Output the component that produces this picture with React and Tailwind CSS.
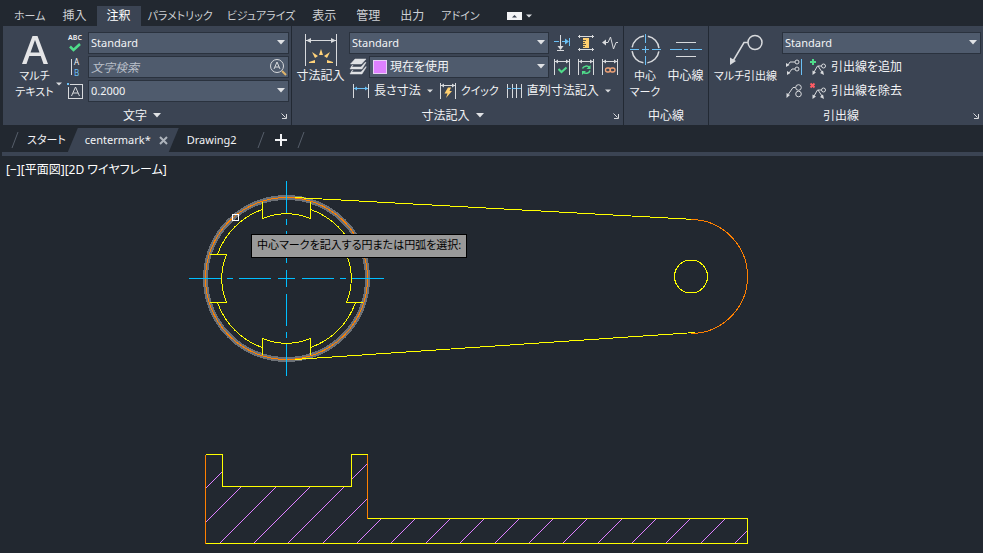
const tabs = ["ホーム", "挿入", "注釈", "パラメトリック", "ビジュアライズ", "表示", "管理", "出力", "アドイン"]
const kanaTabs = ["ホーム", "パラメトリック", "ビジュアライズ", "アドイン"]

function Icon({ w = 18, h = 18, className = "", children }) {
  return (
    <svg
      width={w}
      height={h}
      viewBox={`0 0 ${w} ${h}`}
      fill="none"
      stroke="#d8dadd"
      aria-hidden="true"
      className={`shrink-0 ${className}`}>
      {children}
    </svg>
  )
}

function Caret({ small }) {
  return small ? (
    <Icon w={6} h={4}><path d="M0 0.5h6L3 3.5z" fill="#d8dadd" stroke="none" /></Icon>
  ) : (
    <Icon w={8} h={5}><path d="M0 0h8L4 4.5z" fill="#e0e2e5" stroke="none" /></Icon>
  )
}

function SelectBox({ label, value, swatch }) {
  return (
    <div className="relative min-w-0 flex-1">
      <select
        aria-label={label}
        defaultValue={value}
        className={`block h-[22px] w-full appearance-none border border-[#2a323e] bg-[#4f5b6d] pr-5 leading-5 text-[#f2f3f5] outline-none ${swatch ? "pl-5" : "pl-0.5 text-[11px]"}`}>
        <option>{value}</option>
      </select>
      {swatch && <span className="pointer-events-none absolute top-1 left-1 size-3.5 border border-[#e8d0f5] bg-[#df80ff]" />}
      <span className="pointer-events-none absolute top-2 right-1"><Caret /></span>
    </div>
  )
}

function BigButton({ icon, lines, className = "", caret }) {
  return (
    <button className={`relative flex shrink-0 flex-col items-center pt-0.5 ${className}`}>
      {icon}
      <span className="flex flex-col items-center leading-4 whitespace-nowrap">
        {lines.map((line) => (
          <span key={line}>{line}</span>
        ))}
      </span>
      {caret && <span className="absolute right-1 bottom-4"><Caret small /></span>}
    </button>
  )
}

function IconButton({ label, children }) {
  return (
    <button aria-label={label} className="flex h-[22px] w-[18px] shrink-0 items-center justify-center">
      {children}
    </button>
  )
}

function Panel({ title, caret, launcher, className = "", children }) {
  return (
    <section className={`flex flex-col border-r border-[#222933] pt-1.5 ${className}`}>
      <div className="flex h-[70px]">{children}</div>
      <div className="flex h-[23px] items-center pt-1">
        <button className="flex flex-1 items-center justify-center gap-1.5">
          {title}
          {caret && <Caret />}
        </button>
        {launcher && (
          <button aria-label={`${title} 設定`} className="mr-1 w-1.5">
            <Icon w={6} h={6}><path d="M0.5 0.5l4 4M5.5 1v4.5H1" /></Icon>
          </button>
        )}
      </div>
    </section>
  )
}

function DimFrame({ children, className }) {
  return (
    <Icon className={className}>
      <path d="M1.5 1v16M16.5 1v16M2 3.5h14" shapeRendering="crispEdges" />
      <path d="M2 3.5l3-2v4zM16 3.5l-3-2v4z" fill="#d8dadd" stroke="none" />
      {children}
    </Icon>
  )
}

function TextPanel() {
  return (
    <Panel title="文字" caret launcher className="w-[289px] shrink-0">
      <BigButton
        className="w-[63px] text-[11px]"
        caret
        lines={["マルチ", "テキスト"]}
        icon={
          <Icon w={28} h={34}>
            <path d="M1 30L11.500 2h5L27 30h-4.500l-2.800-8H8.300l-2.800 8zM9.500 18.500h9L14 6z" fill="#e4e5e7" stroke="none" fillRule="evenodd" />
          </Icon>
        } />
      <div className="flex min-w-0 flex-1 flex-col gap-0.5 pr-0.5">
        <div className="flex gap-1">
          <IconButton label="スペルチェック">
            <span className="relative flex h-[22px] flex-col items-center">
              <span className="text-[7px] leading-[11px] font-semibold">ABC</span>
              <Icon w={14} h={9}><path d="M2 3.500l3.500 3.500L12 1" stroke="#4fdc8a" strokeWidth="2.500" /></Icon>
            </span>
          </IconButton>
          <SelectBox label="文字スタイル" value="Standard" />
        </div>
        <div className="flex gap-1">
          <IconButton label="文字位置合わせ">
            <Icon w={1} h={16}><path d="M0.500 0v16" shapeRendering="crispEdges" /></Icon>
            <span className="flex flex-col pl-0.5 text-[8px] leading-[11px]">
              <span>A</span>
              <span className="text-[#6bc0f5]">B</span>
            </span>
          </IconButton>
          <div className="relative min-w-0 flex-1">
            <input
              aria-label="文字検索"
              placeholder="文字検索"
              className="block h-[22px] w-full border border-[#2a323e] bg-[#4f5b6d] pr-6 pl-0.5 italic outline-none placeholder:text-[#b9bfc8]" />
            <button aria-label="検索" className="absolute top-0.5 right-0.5">
              <Icon>
                <circle cx="8" cy="8" r="6.500" />
                <path d="M5 11l3-7 3 7M6 9h4" />
                <path d="M13 13l4 4" stroke="#e0b56a" strokeWidth="2" />
              </Icon>
            </button>
          </div>
        </div>
        <div className="flex gap-1">
          <IconButton label="文字高さ">
            <Icon>
              <path d="M4 2.500h12.500v14H2.500V5" shapeRendering="crispEdges" />
              <path d="M5.500 14l4-9 4 9M7 11h5" />
              <path d="M1 1h2v2H1z" fill="#6bc0f5" stroke="none" />
            </Icon>
          </IconButton>
          <SelectBox label="高さ" value="0.2000" />
        </div>
      </div>
    </Panel>
  )
}

function DimensionPanel() {
  return (
    <Panel title="寸法記入" caret launcher className="w-[332px] shrink-0">
      <BigButton
        className="w-[57px]"
        lines={["寸法記入"]}
        icon={
          <Icon w={34} h={34}>
            <path d="M1.500 0v32M32.500 0v32M2 6.500h30" shapeRendering="crispEdges" />
            <path d="M2 6.500l5-2.500v5zM32 6.500L27 4v5z" fill="#d8dadd" stroke="none" />
            <path d="M17 15l2 6h-4zM8 18l6 4-3 2zM26 18l-6 4 3 2zM5 28l6-2v3H5zM29 28l-6-2v3h6z" fill="#ffd27a" stroke="none" />
          </Icon>
        } />
      <div className="flex min-w-0 flex-1 flex-col gap-0.5 pr-1">
        <div className="flex gap-1">
          <div className="flex min-w-0 flex-1 flex-col gap-0.5">
            <SelectBox label="寸法スタイル" value="Standard" />
            <div className="flex gap-0.5">
              <IconButton label="画層">
                <Icon>
                  <path d="M6 1h11l-4.500 5H1.500zM3 7.500h1L2.500 9H12l4-4.500h1L13 11H1zM3 12.500h1L2.500 14H12l5-5.500v1L13 16H1z" fill="#dfe1e4" stroke="#dfe1e4" strokeWidth="0.500" />
                </Icon>
              </IconButton>
              <SelectBox label="寸法画層" value="現在を使用" swatch />
            </div>
          </div>
          <div className="grid grid-cols-3 gap-x-1.5 gap-y-0.5">
            <IconButton label="寸法マーク中断">
              <Icon>
                <path d="M7.500 1v12" shapeRendering="crispEdges" />
                <path d="M4.500 12h6l-3 4z" fill="#d8dadd" stroke="none" />
                <path d="M4 16.500h7" shapeRendering="crispEdges" />
                <path d="M1 7.500h5M9 7.500h5M16.500 4v8" stroke="#6bc0f5" shapeRendering="crispEdges" />
                <path d="M12 4.500l4 3-4 3z" fill="#6bc0f5" stroke="none" />
              </Icon>
            </IconButton>
            <IconButton label="寸法線間隔">
              <Icon>
                <path d="M1 2.500h16M1 15.500h16M2.500 1v3M15.500 1v3M2.500 14v3M15.500 14v3" shapeRendering="crispEdges" />
                <path d="M6 4h6v10H6z" fill="#ffcf6e" stroke="none" />
                <path d="M6 6.500h3M6 8.500h2M6 10.500h3M6 12.500h2" stroke="#5d5648" shapeRendering="crispEdges" />
              </Icon>
            </IconButton>
            <IconButton label="折り曲げ線">
              <Icon>
                <path d="M2 8.500h5L9.500 3l3 12L15 8.500h2" />
                <path d="M1 8.500l4-3v6z" fill="#d8dadd" stroke="none" />
              </Icon>
            </IconButton>
            <IconButton label="検査">
              <DimFrame><path d="M5.500 11l3 3 5-4.500" stroke="#4fdc8a" strokeWidth="2" /></DimFrame>
            </IconButton>
            <IconButton label="更新">
              <DimFrame>
                <path d="M5.500 10.500a4 3.500 0 0 1 7-1M13 12.500a4 3.500 0 0 1-7 1.500" stroke="#4fdc8a" strokeWidth="1.500" />
                <path d="M13.500 7v4h-4zM5 17v-4h4z" fill="#4fdc8a" stroke="none" />
              </DimFrame>
            </IconButton>
            <IconButton label="再関連付け">
              <DimFrame>
                <rect x="4.500" y="10" width="5" height="4" rx="2" stroke="#f0a277" strokeWidth="1.300" />
                <rect x="9" y="10" width="5" height="4" rx="2" stroke="#f0a277" strokeWidth="1.300" />
              </DimFrame>
            </IconButton>
          </div>
        </div>
        <div className="flex h-[22px] items-center pl-[3px] whitespace-nowrap">
          <button className="flex items-center gap-1">
            <Icon>
              <path d="M1.500 2v14M16.500 2v14" shapeRendering="crispEdges" />
              <path d="M2 6.500h14" stroke="#6bc0f5" shapeRendering="crispEdges" />
              <path d="M2 6.500l3-2v4zM16 6.500l-3-2v4z" fill="#6bc0f5" stroke="none" />
            </Icon>
            長さ寸法
          </button>
          <button aria-label="長さ寸法メニュー" className="px-1.5"><Caret small /></button>
          <button className="flex items-center gap-1 text-[11px]">
            <DimFrame><path d="M9 5.500h3l-1.500 3.500H13L7 16l1.500-4.500H5.500z" fill="#ffcf6e" stroke="none" /></DimFrame>
            クイック
          </button>
          <button className="ml-1.5 flex items-center gap-1">
            <Icon>
              <path d="M2.500 2v14M7.500 2v14M11.500 2v14M16.500 2v14" shapeRendering="crispEdges" />
              <path d="M2 6.500h15" stroke="#6bc0f5" strokeDasharray="4 1" shapeRendering="crispEdges" />
            </Icon>
            直列寸法記入
          </button>
          <button aria-label="直列寸法メニュー" className="px-1.5"><Caret small /></button>
        </div>
      </div>
    </Panel>
  )
}

function CenterPanel() {
  return (
    <Panel title="中心線" className="w-[85px] shrink-0">
      <BigButton
        className="w-[42px] text-[11px]"
        lines={["中心", "マーク"]}
        icon={
          <Icon w={34} h={34}>
            <circle cx="17.500" cy="15.500" r="13.500" strokeWidth="1.500" strokeDasharray="17.200 4" strokeDashoffset="-2" />
            <path d="M2 15.500h9M14 15.500h7M24 15.500h9M17.500 0v9M17.500 12v7M17.500 22v9" stroke="#6bc0f5" shapeRendering="crispEdges" />
          </Icon>
        } />
      <BigButton
        className="w-[39px]"
        lines={["中心線"]}
        icon={
          <Icon w={34} h={34}>
            <path d="M7 8.500h20M7 22.500h20" shapeRendering="crispEdges" />
            <path d="M1 15.500h12M15 15.500h4M21 15.500h12" stroke="#6bc0f5" shapeRendering="crispEdges" />
          </Icon>
        } />
    </Panel>
  )
}

function LeaderPanel() {
  return (
    <Panel title="引出線" launcher className="min-w-[274px] flex-1 border-r-0">
      <BigButton
        className="w-[73px] text-[11px]"
        lines={["マルチ引出線"]}
        icon={
          <Icon w={34} h={34}>
            <circle cx="26" cy="8.500" r="7" strokeWidth="1.500" />
            <path d="M19 8.500h-4L4 27" strokeWidth="1.500" />
            <path d="M1 31V23.500l6 3.500z" fill="#d8dadd" stroke="none" />
          </Icon>
        } />
      <div className="flex min-w-0 flex-1 flex-col gap-0.5 pr-0.5">
        <div className="flex h-[22px]">
          <SelectBox label="引出線スタイル" value="Standard" />
        </div>
        <div className="flex h-[22px] items-center gap-1.5 pl-[3px]">
          <IconButton label="位置合わせ">
            <Icon>
              <circle cx="12" cy="4" r="2" /><circle cx="12" cy="11" r="2" />
              <path d="M10 4H5L3 7M10 11H7l-3 4" />
              <path d="M1 9V5l3.500 2zM2 17v-4l3.500 2z" fill="#d8dadd" stroke="none" />
              <path d="M16.500 1v16" stroke="#6bc0f5" shapeRendering="crispEdges" />
            </Icon>
          </IconButton>
          <button className="flex items-center gap-1 whitespace-nowrap">
            <Icon>
              <path d="M4 1v6M1 4h6" stroke="#4fdc8a" strokeWidth="2" />
              <circle cx="14.500" cy="8" r="2" />
              <path d="M12.500 8H8.500L5 14M9 8l4 6" />
              <path d="M3.500 17v-4.500L7 14.500zM15 17l-4-2 3-2.500z" fill="#d8dadd" stroke="none" />
            </Icon>
            引出線を追加
          </button>
        </div>
        <div className="flex h-[22px] items-center gap-1.5 pl-[3px]">
          <IconButton label="収集">
            <Icon>
              <circle cx="13.500" cy="5.500" r="2.800" /><circle cx="13.500" cy="12" r="2.800" />
              <path d="M10.500 5.500H8L3.500 12" />
              <path d="M1.500 16v-5L5 13z" fill="#d8dadd" stroke="none" />
            </Icon>
          </IconButton>
          <button className="flex items-center gap-1 whitespace-nowrap">
            <Icon>
              <path d="M1.500 1.500l4 4M5.500 1.500l-4 4" stroke="#ff5c64" strokeWidth="2" />
              <circle cx="14.500" cy="8" r="2" />
              <path d="M12.500 8H8.500L5 14M9 8l4 6" />
              <path d="M3.500 17v-4.500L7 14.500zM15 17l-4-2 3-2.500z" fill="#d8dadd" stroke="none" />
            </Icon>
            引出線を除去
          </button>
        </div>
      </div>
    </Panel>
  )
}

function Slash() {
  return (
    <Icon w={8} h={18}><path d="M1 17L7 1" stroke="#565e6a" /></Icon>
  )
}

function FileTabs() {
  return (
    <div className="ml-0.5 border-b-4 border-[#3b4453] pt-[3px] text-[11px] text-[#f2f3f5]">
      <div className="flex h-6 items-center pl-[9px]">
        <Slash />
        <a href="#start" className="ml-2">スタート</a>
        <div className="ml-0.5 flex h-6 items-center gap-2 bg-[#3b4453] pr-[11px] pl-[17px] [clip-path:polygon(10px_0,100%_0,calc(100%-10px)_100%,0_100%)]">
          <a href="#centermark">centermark*</a>
          <button aria-label="閉じる">
            <Icon w={9} h={9}><path d="M1 1l7 7M8 1L1 8" stroke="#aeb4bc" strokeWidth="2" /></Icon>
          </button>
        </div>
        <a href="#drawing2" className="mr-5 ml-2">Drawing2</a>
        <Slash />
        <button aria-label="新規図面" className="mx-2.5">
          <Icon w={12} h={12}><path d="M6 0v12M0 6h12" strokeWidth="2" stroke="#f2f3f5" /></Icon>
        </button>
        <Slash />
      </div>
    </div>
  )
}

const hatch = Array.from({ length: 18 }, (_, i) => Math.round(151 + i * 34.35))

function Drawing() {
  return (
    <svg width="100%" height="100%" fill="none" stroke="#ffff00" className="absolute inset-0" shapeRendering="crispEdges" aria-label="平面図">
      <defs>
        <clipPath id="section">
          <path d="M205 298h17v32h130v-32h16v64h380v25H205z" />
        </clipPath>
      </defs>

      {/* plan view */}
      <circle cx="286.500" cy="122.500" r="81" stroke="#6d7278" strokeWidth="5" />
      <circle cx="286.500" cy="122.500" r="81" stroke="#ff8000" />
      <path
        stroke="#00bfff"
        d="M189 122.500h32M227 122.500h6M239 122.500h32M278 122.500h17M302 122.500h32M340 122.500h6M352 122.500h32M286.500 25v32M286.500 63v6M286.500 75v32M286.500 114v17M286.500 138v32M286.500 176v6M286.500 188v32" />
      <path d="M262.500 46v16.500A65 65 0 0 1 310.500 62.500V46M262.500 199v-16.500A65 65 0 0 0 310.500 182.500V199" />
      <path d="M210 98.500h16.500A65 65 0 0 0 226.500 146.500H210M363 98.500h-16.500A65 65 0 0 1 346.500 146.500H363" />
      <path d="M262.500 53.500A73 73 0 0 0 217.500 98.500M310.500 53.500A73 73 0 0 1 355.500 98.500M217.500 146.500A73 73 0 0 0 262.500 191.500M355.500 146.500A73 73 0 0 1 310.500 191.500" />
      <path d="M295 41.500L695 63.500M295 203.500L695 176.500" />
      <circle cx="691" cy="120.500" r="16.500" />
      <path d="M690.500 63.500A57 57 0 0 1 690.500 177.500" stroke="#ff8000" />
      <rect x="232.500" y="58.500" width="6" height="6" stroke="#ffffff" />

      {/* section view */}
      <g clipPath="url(#section)" stroke="#df80ff">
        {hatch.map((x) => (
          <path key={x} d={`M${x} 387l100 -100`} />
        ))}
      </g>
      <path d="M205.500 298.500h17v32h129v-32h16M367.500 362.500h380v25h-542" />
      <path d="M205.500 298.500v89M367.500 298.500v64" stroke="#ff8000" />
    </svg>
  )
}

export default function App() {
  return (
    <div className="flex min-h-screen flex-col overflow-hidden bg-[#222830] font-['Noto_Sans','Noto_Sans_CJK_JP',sans-serif] text-xs text-[#f2f3f5] [font-feature-settings:'palt']">
      <nav className="flex h-[26px] items-stretch pt-1.5 pl-[7px]">
        {tabs.map((tab) => (
          <button
            key={tab}
            className={`whitespace-nowrap ${kanaTabs.includes(tab) ? "px-[7px] text-[11px]" : "px-2.5"} ${tab === "注釈" ? "bg-[#3b4453] text-white" : "text-[#cdd0d4]"}`}>
            {tab}
          </button>
        ))}
        <button aria-label="リボンを最小化" className="ml-5 flex items-center gap-1">
          <Icon w={15} h={8}>
            <path d="M0 0h15v8H0z" fill="#f2f3f5" stroke="none" />
            <path d="M5 5.500h5L7.500 3z" fill="#3b4453" stroke="none" />
          </Icon>
          <Caret small />
        </button>
      </nav>
      <header className="ml-[3px] flex h-[99px] bg-[#3b4453]">
        <TextPanel />
        <DimensionPanel />
        <CenterPanel />
        <LeaderPanel />
      </header>
      <FileTabs />
      <main className="relative flex-1">
        <Drawing />
        <p className="relative pt-1 pl-1.5 leading-5 text-white">[−][平面図][2D ワイヤフレーム]</p>
        <p className="absolute top-[78px] left-[251px] border border-black bg-[#999999] px-[5px] pb-0.5 text-[11px] leading-5 whitespace-nowrap text-black">
          中心マークを記入する円または円弧を選択:
        </p>
      </main>
    </div>
  )
}
